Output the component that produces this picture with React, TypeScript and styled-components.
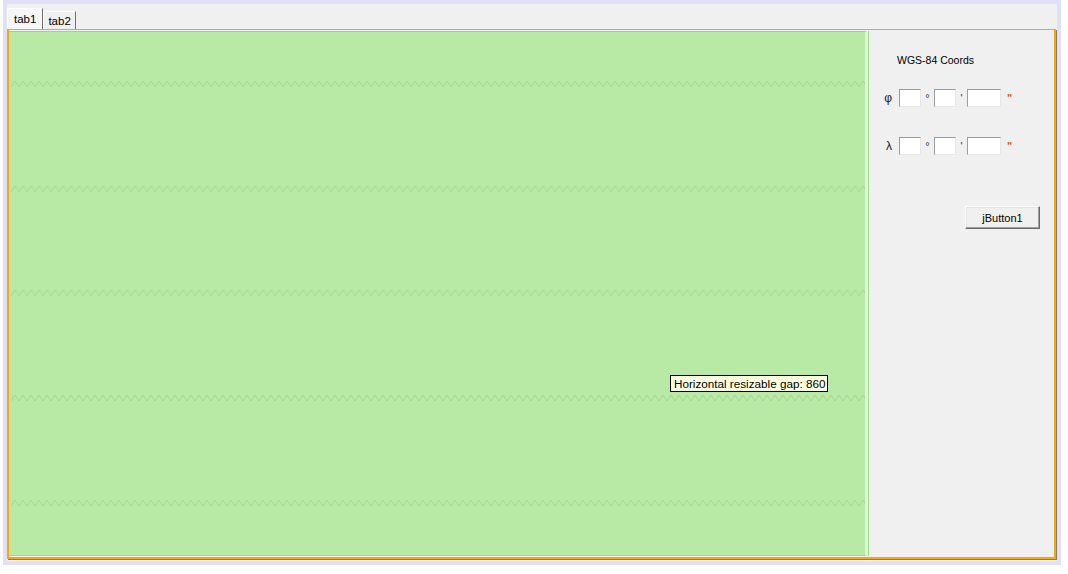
import React from "react";
import styled, { createGlobalStyle } from "styled-components";

const GlobalStyle = createGlobalStyle`
  html, body {
    margin: 0;
    padding: 0;
    background: #ffffff;
  }
  body {
    font-family: "Liberation Sans", Arial, sans-serif;
    font-size: 11px;
    color: #000000;
  }
  * { box-sizing: border-box; }
`;

const Frame = styled.div`
  width: 1058px;
  height: 565px;
  margin-left: 3px;
  padding: 4px;
  background: #e0e0f8;
`;

const Window = styled.div`
  height: 100%;
  background: #f0f0f0;
  display: flex;
  flex-direction: column;
  padding: 0 0 2px 0;
`;

const TabStrip = styled.div`
  height: 25px;
  display: flex;
  align-items: flex-end;
`;

const Tab = styled.div<{ $active?: boolean }>`
  height: ${(p) => (p.$active ? 21 : 18)}px;
  padding: 0 ${(p) => (p.$active ? 6 : 4)}px;
  display: flex;
  align-items: center;
  font-size: 11.5px;
  background: ${(p) => (p.$active ? "#f6f6f6" : "#f0f0f0")};
  border-left: 1px solid #ffffff;
  border-top: 1px solid #ffffff;
  border-right: 1px solid #6f6f6f;
  margin-right: ${(p) => (p.$active ? 0 : 0)}px;
  color: #000;
`;

const Pane = styled.div`
  width: 1049px;
  height: 530px;
  display: flex;
  padding: 1px 0 1px 0;
  border-top: 1px solid #ffa500;
  border-left: 2px solid #ffa500;
  border-right: 2px solid #ffa500;
  border-bottom: 2px solid #ffa500;
  box-shadow: 1px 1px 0 #7d7d7d;
`;

const GreenArea = styled.div`
  position: relative;
  width: 858px;
  height: 525px;
  background: #b8e9a5;
  border-top: 1px solid #a9c9a0;
  border-right: 2px solid #e2f3da;
  border-bottom: 1px solid #a8d696;
  display: grid;
  grid-template-rows: repeat(5, 1fr);
`;

const WaveRow = styled.div`
  display: flex;
  align-items: center;
  padding-left: 2px;
`;

const Tooltip = styled.div`
  position: absolute;
  left: 661px;
  top: 343px;
  height: 17px;
  padding: 0 2px 0 3px;
  display: flex;
  align-items: center;
  background: #ffffe1;
  border: 1px solid #000000;
  font-size: 11.7px;
  white-space: nowrap;
`;

const SidePanel = styled.div`
  flex: 1;
  margin-left: 1px;
  border-left: 1px solid #9fdf8a;
  display: flex;
  flex-direction: column;
`;

const Title = styled.div`
  margin: 22px 0 0 28px;
  line-height: 14px;
  font-size: 10.5px;
`;

const CoordRow = styled.div<{ $gap: number }>`
  margin-top: ${(p) => p.$gap}px;
  display: flex;
  align-items: center;
  height: 18px;
`;

const Symbol = styled.span`
  width: 24px;
  padding-right: 1px;
  text-align: right;
  font-size: 12px;
  color: #1a1a1a;
`;

const Field = styled.div<{ $w: number }>`
  width: ${(p) => p.$w}px;
  height: 18px;
  margin-left: 6px;
  background: #ffffff;
  border-top: 1px solid #9c9c9c;
  border-left: 1px solid #9c9c9c;
  border-right: 1px solid #e6e6e6;
  border-bottom: 1px solid #e6e6e6;
`;

const Unit = styled.span<{ $w: number; $accent?: boolean }>`
  width: ${(p) => p.$w}px;
  margin-right: -6px;
  text-align: center;
  font-size: 11px;
  font-weight: ${(p) => (p.$accent ? "bold" : "normal")};
  color: ${(p) => (p.$accent ? "#d05010" : "#333333")};
`;

const Actions = styled.div`
  margin-top: 51px;
  display: flex;
  justify-content: flex-end;
  padding-right: 14px;
`;

const Button = styled.button`
  width: 75px;
  height: 23px;
  padding: 0;
  font-family: "Liberation Sans", Arial, sans-serif;
  font-size: 11px;
  color: #000;
  background: #f0f0f0;
  border-top: 1px solid #ffffff;
  border-left: 1px solid #ffffff;
  border-right: 1px solid #6a6a6a;
  border-bottom: 1px solid #6a6a6a;
  box-shadow: inset -1px -1px 0 #a0a0a0, inset 1px 1px 0 #e3e3e3;
`;

function Zigzag() {
  const pts: string[] = [];
  for (let x = 0, i = 0; x <= 856; x += 4, i++) {
    pts.push(`${x},${i % 2 === 0 ? 7 : 1}`);
  }
  return (
    <svg width="854" height="8" viewBox="0 0 854 8">
      <polyline points={pts.join(" ")} fill="none" stroke="#a6d794" strokeWidth="1" />
    </svg>
  );
}

function CoordInput({ symbol, gap }: { symbol: string; gap: number }) {
  return (
    <CoordRow $gap={gap}>
      <Symbol>{symbol}</Symbol>
      <Field $w={22} />
      <Unit $w={13}>°</Unit>
      <Field $w={22} />
      <Unit $w={11}>'</Unit>
      <Field $w={34} />
      <Unit $w={17} $accent>"</Unit>
    </CoordRow>
  );
}

export default function App() {
  return (
    <>
      <GlobalStyle />
      <Frame>
        <Window>
          <TabStrip>
            <Tab $active>tab1</Tab>
            <Tab>tab2</Tab>
          </TabStrip>
          <Pane>
            <GreenArea>
              {[0, 1, 2, 3, 4].map((i) => (
                <WaveRow key={i}>
                  <Zigzag />
                </WaveRow>
              ))}
              <Tooltip>Horizontal resizable gap: 860</Tooltip>
            </GreenArea>
            <SidePanel>
              <Title>WGS-84 Coords</Title>
              <CoordInput symbol="φ" gap={22} />
              <CoordInput symbol="λ" gap={30} />
              <Actions>
                <Button>jButton1</Button>
              </Actions>
            </SidePanel>
          </Pane>
        </Window>
      </Frame>
    </>
  );
}
